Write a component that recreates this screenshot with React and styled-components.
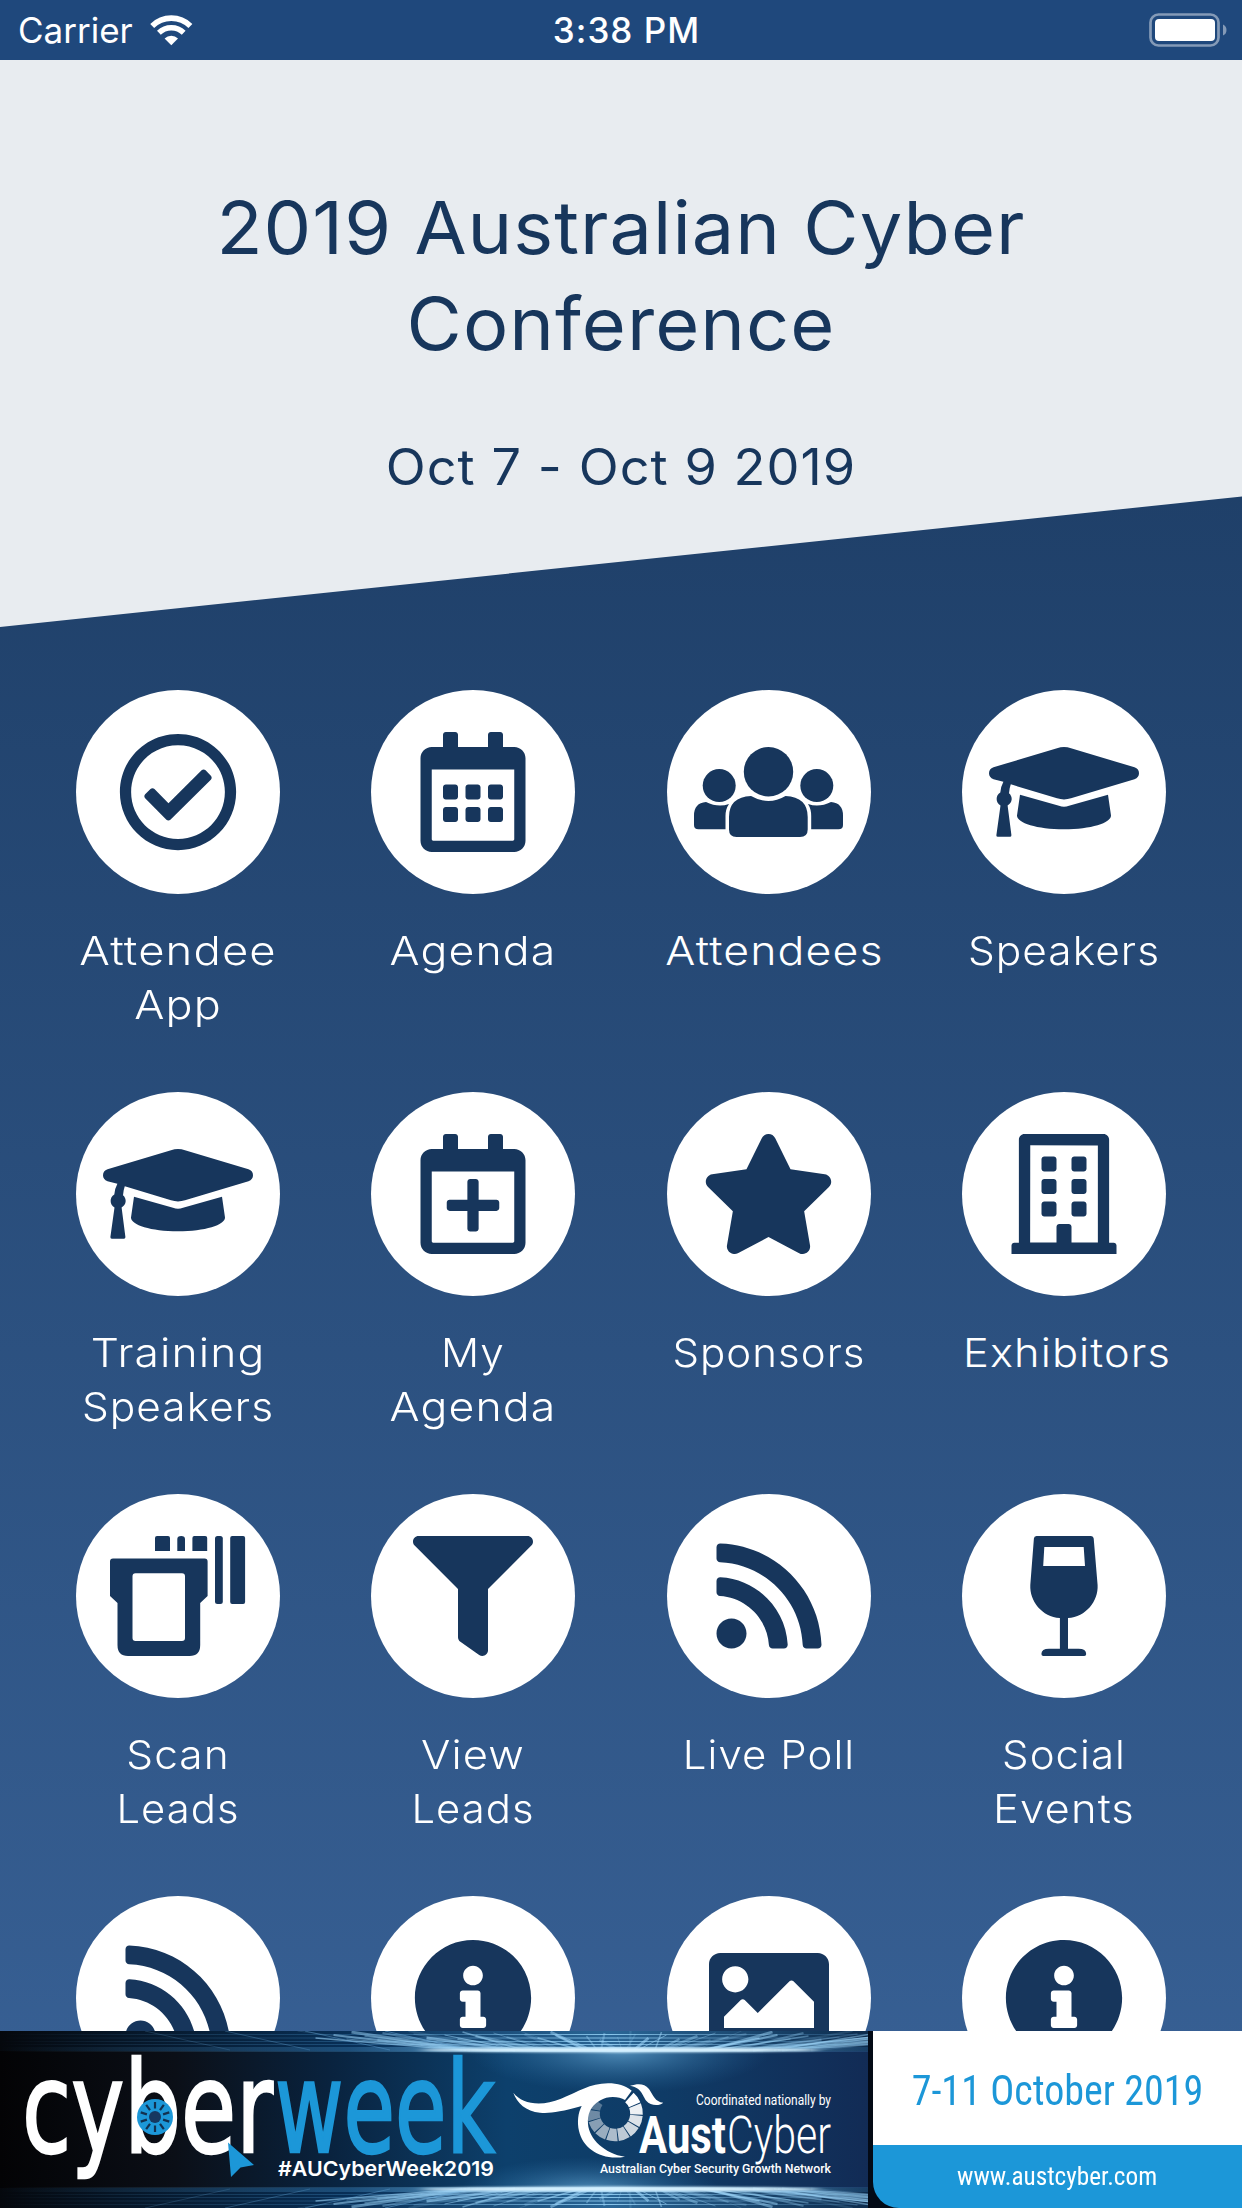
import React from 'react'
import styled, { createGlobalStyle } from 'styled-components'
import {
  FaRegCheckCircle,
  FaRegCalendarAlt,
  FaRegCalendarPlus,
  FaRegBuilding,
  FaStar,
  FaFilter,
  FaRss,
  FaInfoCircle,
  FaImage
} from 'react-icons/fa'

const NAVY = '#17365c'
const SKY = '#1c97d8'

const UsersIcon = () => (
  <svg width="204" height="204" viewBox="0 0 204 204" fill="currentColor">
    <circle cx="101.5" cy="81.7" r="24.7" />
    <circle cx="52.2" cy="95.6" r="16.5" />
    <circle cx="149.8" cy="95.6" r="16.5" />
    <path d="M84 106Q101.500 116 118.500 106Q140.700 107 140.700 127V139.500Q140.700 147 133 147H69.500Q62 147 62 139.500V127Q62 107 84 106Z" />
    <path d="M39 112Q51 118 62 114Q58.500 119 58.500 126V139.300H31.500Q27 139.300 27 135V125.500Q27 113 39 112Z" />
    <path d="M164 112Q152 118 141 114Q144.200 119 144.200 126V139.300H171.500Q176 139.300 176 135V125.500Q176 113 164 112Z" />
  </svg>
)

const CapIcon = () => (
  <svg width="204" height="204" viewBox="0 0 204 204" fill="currentColor">
    <path d="M95 58.200Q102 56 109 58.200L172.500 77.300Q177 79 177 83.300Q177 87.500 172.500 89.300L109 108.300Q102 110.500 95 108.300L48.800 94.300Q47.400 98 47 103.200A7.400 7.400 0 0 1 45.600 115.500L49.400 145Q49.500 146.800 48 146.800H35.800Q34.200 146.800 34.400 145L38.500 115.500A7.400 7.400 0 0 1 38.300 102.600Q39 96 41.400 91.800L31.500 89.300Q27 87.500 27 83.300Q27 79 31.500 77.300Z" />
    <path d="M58 104.800L97 115.800Q102 117.600 107 115.800L146 104.800L149 125.500C149 133 129 139.300 102 139.300C75 139.300 55 133 55 125.500Z" />
  </svg>
)

const ScannerIcon = () => (
  <svg width="204" height="204" viewBox="0 0 204 204" fill="currentColor">
    <path d="M79 57V44Q79 42 81 42H92Q94 42 94 44V57ZM101.300 57V45Q101.300 42 105.200 42Q109 42 109 45V57ZM116.400 57V44Q116.400 42 118.400 42H129.200Q131.200 42 131.200 44V57Z" />
    <rect x="139" y="42" width="7.8" height="68" rx="2.500" />
    <rect x="154.200" y="42" width="14.900" height="68" rx="2" />
    <path
      fillRule="evenodd"
      d="M37 64.500H128.600Q131.600 64.500 131.600 67.500V102L124.200 109V151Q124.200 162 113.500 162H52Q41.500 162 41.500 151V109L34 102V67.500Q34 64.500 37 64.500ZM59.500 79.300Q56.500 79.300 56.500 82.300V144Q56.500 147 59.500 147H106Q109 147 109 144V82.300Q109 79.300 106 79.300Z"
    />
  </svg>
)

const WineIcon = () => (
  <svg width="204" height="204" viewBox="0 0 204 204" fill="currentColor">
    <path
      fillRule="evenodd"
      d="M74.500 42H129Q131.500 42 131.700 44.500L135.600 91C136.500 107 124 123 106 124V154.700H116.500Q124.200 154.700 124.200 160Q124.200 162 122.200 162H81.400Q79.400 162 79.400 160Q79.400 154.700 87 154.700H97.900V124C80 123 67.500 107 68.300 91L71.900 44.500Q72.100 42 74.500 42ZM82.300 53L81.200 72H123L121.700 53Z"
    />
  </svg>
)

const WifiIcon = () => (
  <svg width="43" height="31" viewBox="0 0 43 31" fill="none" stroke="#fff">
    <path d="M2.200 11A27.200 27.200 0 0 1 40.400 11" strokeWidth="5.600" />
    <path d="M8.900 17.800A17.700 17.700 0 0 1 33.700 17.800" strokeWidth="5.400" />
    <path d="M14.600 23.500A9.500 9.500 0 0 1 28 23.500L21.300 30.300Z" fill="#fff" stroke="none" />
  </svg>
)

const BatteryIcon = () => (
  <svg width="78" height="34" viewBox="0 0 78 34">
    <rect x="1.500" y="1.500" width="68" height="31" rx="8" fill="none" stroke="#fff" strokeOpacity=".45" strokeWidth="2.700" />
    <rect x="6" y="6" width="60" height="22" rx="4" fill="#fff" />
    <path d="M74 11.500Q77.500 13 77.500 17Q77.500 21 74 22.500Z" fill="#fff" fillOpacity=".45" />
  </svg>
)

const point = (r, deg) => {
  const a = (deg * Math.PI) / 180
  return `${615 + r * Math.cos(a)} ${82.500 + r * Math.sin(a)}`
}

// iris of the AustCyber eye, fading clockwise from the top right
const Iris = () =>
  [1, 0.93, 0.86, 0.8, 0.73, 0.66, 0.58, 0.5, 0.4, 0.3].map((opacity, i) => {
    const from = -48 + i * 26.5
    const to = from + 24
    return (
      <path
        key={i}
        fill="#fff"
        fillOpacity={opacity}
        d={`M${point(15.200, from)}L${point(27.800, from)}A27.800 27.800 0 0 1 ${point(27.800, to)}L${point(15.200, to)}A15.200 15.200 0 0 0 ${point(15.200, from)}Z`}
      />
    )
  })

const streaks = Array.from({ length: 60 }, (_, i) => {
  const spread = i - 29.500
  const start = (i * 7) % 10
  return {
    x1: 622 + spread * 6 + ((i * 37) % 13),
    x2: 622 + spread * 11 + ((i * 53) % 23),
    y1: start,
    width: 1 + ((i * 17) % 4) * 0.6,
    opacity: 0.15 + ((i * 29) % 10) * 0.05
  }
})

const GridBand = () => (
  <g>
    <rect width="873" height="20" fill="url(#band)" />
    {[3, 6.500, 10, 13, 16].map(y => (
      <rect key={y} y={y} width="873" height="1" fill="url(#line)" />
    ))}
    {streaks.map((s, i) => (
      <line
        key={i}
        x1={s.x2}
        y1={s.y1}
        x2={s.x1}
        y2="19"
        stroke="#9bd4f8"
        strokeWidth={s.width}
        strokeOpacity={s.opacity}
      />
    ))}
    {[170, 250, 330, 410].map(x => (
      <line key={x} x1={x - 25} y1="0" x2={x + 60} y2="19" stroke="#6fb0e0" strokeWidth="1" strokeOpacity={x / 800} />
    ))}
    <rect y="17" width="873" height="4" fill="url(#line)" />
    <ellipse cx="620" cy="19" rx="200" ry="2.400" fill="#d9f2ff" filter="url(#soft)" />
  </g>
)

const spokes = Array.from({ length: 10 }, (_, i) => i * 36)

const CyberWeekArt = () => (
  <Art viewBox="0 0 873 177">
    <defs>
      <linearGradient id="night">
        <stop offset="0" stopColor="#030305" />
        <stop offset=".2" stopColor="#0b0f17" />
        <stop offset=".38" stopColor="#09233f" />
        <stop offset=".58" stopColor="#0d406c" />
        <stop offset=".76" stopColor="#0f3b66" />
        <stop offset="1" stopColor="#122b55" />
      </linearGradient>
      <linearGradient id="band">
        <stop offset="0" stopColor="#05080d" />
        <stop offset=".4" stopColor="#082f57" />
        <stop offset=".7" stopColor="#2a6696" />
        <stop offset="1" stopColor="#0c2a4b" />
      </linearGradient>
      <linearGradient id="line">
        <stop offset="0" stopColor="#5fa9dd" stopOpacity="0" />
        <stop offset=".4" stopColor="#4388bb" stopOpacity=".35" />
        <stop offset=".7" stopColor="#9fdcff" stopOpacity=".8" />
        <stop offset="1" stopColor="#2a5e8e" stopOpacity=".35" />
      </linearGradient>
      <radialGradient id="glow">
        <stop offset="0" stopColor="#67a8d4" stopOpacity=".75" />
        <stop offset="1" stopColor="#2a6fa5" stopOpacity="0" />
      </radialGradient>
      <filter id="soft" x="-10%" y="-200%" width="120%" height="500%">
        <feGaussianBlur stdDeviation="6 1" />
      </filter>
    </defs>
    <rect width="873" height="177" fill="url(#night)" />
    <ellipse cx="620" cy="20" rx="150" ry="42" fill="url(#glow)" />
    <ellipse cx="590" cy="160" rx="130" ry="34" fill="url(#glow)" />
    <GridBand />
    <g transform="translate(0 177) scale(1 -1)">
      <GridBand />
    </g>
    <rect x="868" width="5" height="177" fill="#030a16" />

    <g fontFamily="DejaVu Sans" fontSize="126" strokeWidth="2.500">
      <text x="22" y="120.500" fill="#fff" stroke="#fff" textLength="251" lengthAdjust="spacingAndGlyphs">
        cyber
      </text>
      <text x="275" y="120.500" fill={SKY} stroke={SKY} textLength="220" lengthAdjust="spacingAndGlyphs">
        week
      </text>
    </g>
    <circle cx="155" cy="86" r="18" fill={SKY} />
    <circle cx="155" cy="86" r="6" fill="#16375f" />
    {spokes.map(deg => (
      <line
        key={deg}
        x1="155"
        y1="71"
        x2="155"
        y2="77.500"
        stroke="#12304f"
        strokeWidth="2.200"
        transform={`rotate(${deg} 155 86)`}
      />
    ))}
    <path d="M228 111.500L254 134L240.500 136.500L231 146Z" fill={SKY} />
    <text x="278" y="145" fontFamily="Inter" fontWeight="600" fontSize="20.500" fill="#fff" textLength="216" lengthAdjust="spacingAndGlyphs">
      #AUCyberWeek2019
    </text>

    <path
      fill="#fff"
      d="M513.300 61.700C522 73 541 76 561 67.700C578 61 590 52.300 608 52.300C618 52.300 625 54.500 631.700 59.700L625 69C619 65.500 608 64.500 600 69.500C590 75 587.300 84 588 93C589 108 605 123 625 125.700C602 130 583 118 579 100C577 91 578 82 581.700 75C560 81 550 82.500 540 81.700C526 80.500 517 72 513.300 61.700Z"
    />
    <path fill="#fff" d="M630 54.700C638 52.500 644 52 649 58C653 64 655 71 663.300 71.700C659 75.500 650 74.500 646.500 70C642 64 642 57 630 54.700Z" />
    <Iris />
    <g fontFamily="Roboto" fill="#fff">
      <text x="696" y="73.500" fontSize="14" textLength="135" lengthAdjust="spacingAndGlyphs">
        Coordinated nationally by
      </text>
      <text x="639" y="122.300" fontSize="51" fontWeight="700" textLength="87" lengthAdjust="spacingAndGlyphs">
        Aust
      </text>
      <text x="727" y="122.300" fontSize="51" fontWeight="300" textLength="104" lengthAdjust="spacingAndGlyphs">
        Cyber
      </text>
      <text x="600" y="141.700" fontSize="13" fontWeight="500" textLength="231" lengthAdjust="spacingAndGlyphs">
        Australian Cyber Security Growth Network
      </text>
    </g>
  </Art>
)

// each label line is [text, horizontal stretch]
const tiles = [
  { lines: [['Attendee', 1.135], ['App', 1.12]], icon: FaRegCheckCircle },
  { lines: [['Agenda', 1.115]], icon: FaRegCalendarAlt },
  { lines: [['Attendees', 1.115]], shift: 5.5, icon: UsersIcon, size: 204 },
  { lines: [['Speakers', 1.06]], icon: CapIcon, size: 204 },
  { lines: [['Training', 1.11], ['Speakers', 1.06]], icon: CapIcon, size: 204 },
  { lines: [['My', 1.06], ['Agenda', 1.115]], icon: FaRegCalendarPlus },
  { lines: [['Sponsors', 1.05]], icon: FaStar, size: 135 },
  { lines: [['Exhibitors', 1.085]], shift: 3, icon: FaRegBuilding },
  { lines: [['Scan', 1.06], ['Leads', 1.045]], icon: ScannerIcon, size: 204 },
  { lines: [['View', 1.09], ['Leads', 1.045]], icon: FaFilter },
  { lines: [['Live Poll', 1.05]], icon: FaRss },
  { lines: [['Social', 1.05], ['Events', 1.09]], icon: WineIcon, size: 204 },
  { lines: [], icon: FaRss },
  { lines: [], icon: FaInfoCircle },
  { lines: [], icon: FaImage },
  { lines: [], icon: FaInfoCircle }
]

function App() {
  return (
    <Screen>
      <GlobalStyle />
      <StatusBar>
        <Carrier>
          <span>Carrier</span>
          <WifiIcon />
        </Carrier>
        <Clock>3:38 PM</Clock>
        <Battery>
          <BatteryIcon />
        </Battery>
      </StatusBar>
      <Header>
        <Title>
          2019 Australian Cyber
          <br />
          Conference
        </Title>
        <Dates>Oct 7 - Oct 9 2019</Dates>
      </Header>
      <Grid>
        {tiles.map(({ lines, icon: Icon, size = 120, shift = 0 }, i) => (
          <Tile key={i}>
            <Disc $size={size}>
              <Icon />
            </Disc>
            <Label>
              {lines.map(([text, stretch]) => (
                <Line key={text} $stretch={stretch} $shift={shift}>
                  {text}
                </Line>
              ))}
            </Label>
          </Tile>
        ))}
      </Grid>
      <Banner>
        <CyberWeekArt />
        <Details>
          <When>
            <Squeeze $by={0.932}>7-11 October 2019</Squeeze>
          </When>
          <Site>
            <Squeeze $by={0.97}>www.austcyber.com</Squeeze>
          </Site>
        </Details>
      </Banner>
    </Screen>
  )
}

const GlobalStyle = createGlobalStyle`
  * {
    box-sizing: border-box;
  }

  body {
    margin: 0;
  }
`

const Screen = styled.div`
  display: flex;
  flex-direction: column;
  width: 1242px;
  height: 2208px;
  overflow: hidden;
  background: linear-gradient(#1c3c64 300px, #396297 2208px);
  font-family: Inter, 'Noto Sans', sans-serif;
`

const StatusBar = styled.div`
  flex: none;
  display: grid;
  grid-template-columns: 1fr auto 1fr;
  align-items: center;
  height: 60px;
  padding: 0 15px 0 18px;
  background: #1f487c;
  color: #fff;
  font-size: 35px;
`

const Carrier = styled.div`
  display: flex;
  align-items: center;
  gap: 17px;
  padding-top: 1px;
  line-height: 59px;
`

const Clock = styled.div`
  padding: 1px 0 0 8px;
  font-weight: 500;
  letter-spacing: 1px;
  line-height: 59px;
`

const Battery = styled.div`
  display: flex;
  justify-content: flex-end;
`

const Header = styled.header`
  flex: none;
  height: 567px;
  padding-top: 120px;
  background: #e8ecf0;
  clip-path: polygon(0 0, 100% 0, 100% 436.500px, 0 100%);
  color: ${NAVY};
  letter-spacing: 1px;
  text-align: center;
`

const Title = styled.h1`
  margin: 0;
  font-size: 73px;
  font-weight: 400;
  line-height: 96px;
  transform: scaleX(1.036);
`

const Dates = styled.p`
  margin: 65px 0 0;
  font-size: 50px;
  line-height: 60px;
  transform: scaleX(1.045);
`

const Grid = styled.main`
  flex: 1;
  min-height: 0;
  overflow: hidden;
  display: grid;
  grid-template-columns: repeat(4, 295.300px);
  grid-auto-rows: 402px;
  justify-content: center;
  padding-top: 63px;
`

const Tile = styled.div`
  display: flex;
  flex-direction: column;
  align-items: center;
`

const Disc = styled.div`
  flex: none;
  display: flex;
  align-items: center;
  justify-content: center;
  width: 204px;
  height: 204px;
  border-radius: 50%;
  background: #fff;
  color: ${NAVY};

  svg {
    flex: none;
    width: ${p => p.$size}px;
    height: ${p => (p.$size === 204 ? 204 : 120)}px;
  }
`

const Label = styled.div`
  width: 204px;
  margin-top: 30px;
  color: #fff;
  font-size: 40px;
  font-weight: 300;
  letter-spacing: 1px;
  line-height: 54px;
  text-align: center;
  white-space: nowrap;
`

const Line = styled.div`
  transform: translateX(${p => p.$shift}px) scaleX(${p => p.$stretch});
`

const Banner = styled.footer`
  flex: none;
  display: flex;
  height: 177px;
  background: #030a16;
`

const Art = styled.svg`
  flex: none;
  display: block;
  width: 873px;
  height: 177px;
`

const Details = styled.div`
  flex: 1;
  display: flex;
  flex-direction: column;
  overflow: hidden;
  border-bottom-left-radius: 26px;
  font-family: 'Roboto Condensed', Roboto, sans-serif;
  white-space: nowrap;
`

const When = styled.div`
  flex: none;
  display: flex;
  align-items: center;
  justify-content: center;
  height: 114px;
  padding-top: 4px;
  background: #fff;
  color: ${SKY};
  font-size: 43px;
`

const Site = styled.div`
  flex: 1;
  display: flex;
  align-items: center;
  justify-content: center;
  padding-bottom: 2px;
  background: ${SKY};
  color: #fff;
  font-size: 26px;
`

const Squeeze = styled.span`
  transform: scaleX(${p => p.$by});
`

export default App
